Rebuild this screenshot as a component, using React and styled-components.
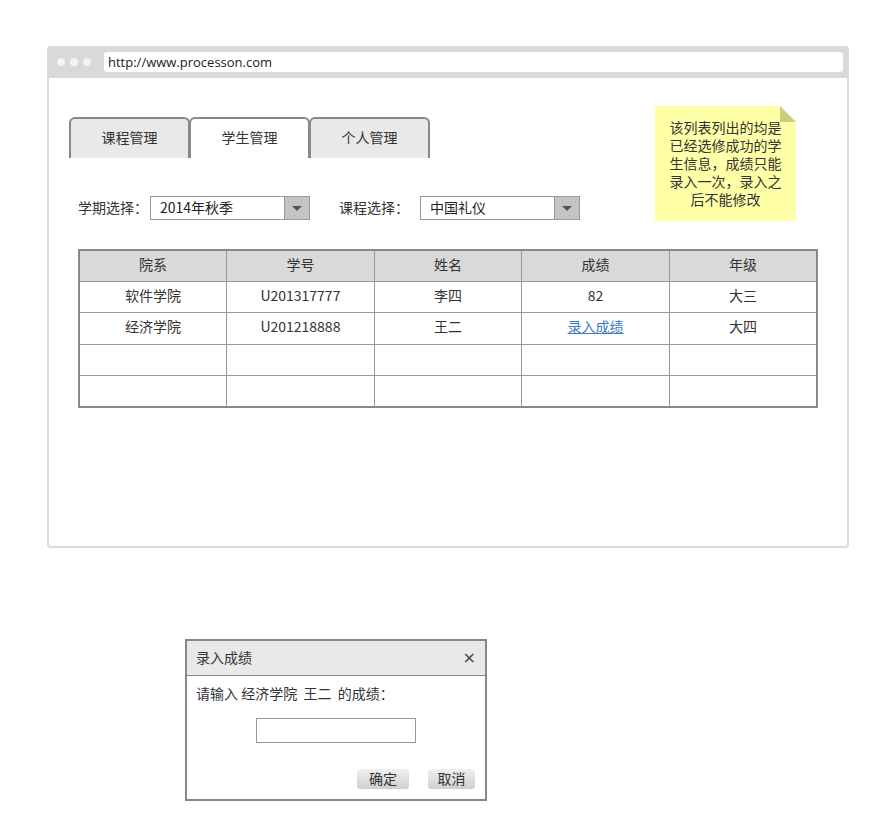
import React from 'react';
import styled, { createGlobalStyle } from 'styled-components';

const GlobalStyle = createGlobalStyle`
  body {
    margin: 0;
    background: #fff;
    font-family: "Noto Sans CJK SC", "Noto Sans", sans-serif;
    font-size: 14px;
    color: #333;
  }
`;

const Page = styled.div`
  width: 880px;
  height: 832px;
  padding: 46px 0 0 47px;
  box-sizing: border-box;
`;

const Frame = styled.div`
  position: relative;
  width: 802px;
  height: 502px;
  box-sizing: border-box;
  border: 2px solid #d9d9d9;
  border-radius: 4px;
  display: flex;
  flex-direction: column;
`;

const TopBar = styled.div`
  height: 30px;
  background: #d9d9d9;
  display: flex;
  align-items: center;
  padding: 0 4px 2px 8px;
  box-sizing: border-box;
  gap: 5px;
`;

const Dot = styled.span`
  width: 8px;
  height: 8px;
  border-radius: 50%;
  background: #f4f4f4;
`;

const UrlField = styled.div`
  flex: 1;
  margin-left: 8px;
  height: 20px;
  background: #fff;
  border-radius: 3px;
  display: flex;
  align-items: center;
  padding-left: 4px;
  font-family: "Open Sans", "Noto Sans", sans-serif;
  font-size: 13px;
  color: #222;
`;

const Content = styled.div`
  padding: 39px 0 0 20px;
`;

const Tabs = styled.div`
  display: flex;
`;

const Tab = styled.div`
  width: 121px;
  height: 41px;
  box-sizing: border-box;
  border: 2px solid #888;
  border-bottom: none;
  border-radius: 6px 6px 0 0;
  background: ${p => (p.$active ? '#fff' : '#e9e9e9')};
  margin-left: ${p => (p.$first ? '0' : '-1px')};
  padding-bottom: 4px;
  display: flex;
  align-items: center;
  justify-content: center;
  color: #333;
  font-size: 14px;
`;

const FilterRow = styled.div`
  display: flex;
  align-items: center;
  margin: 38px 0 0 9px;
  height: 24px;
`;

const Label = styled.span`
  font-size: 14px;
  color: #333;
  width: ${p => p.$w}px;
  margin-left: ${p => p.$ml || 0}px;
  padding-bottom: 2px;
`;

const Select = styled.div`
  width: 160px;
  height: 24px;
  box-sizing: border-box;
  border: 1px solid #999;
  display: flex;
  background: #fff;
`;

const SelectValue = styled.div`
  flex: 1;
  display: flex;
  align-items: center;
  padding: 0 0 2px 9px;
  font-size: 14px;
  color: #222;
`;

const SelectArrow = styled.div`
  width: 24px;
  background: #c4c4c4;
  border-left: 1px solid #999;
  display: flex;
  align-items: center;
  justify-content: center;
  &::after {
    content: '';
    border-left: 5px solid transparent;
    border-right: 5px solid transparent;
    border-top: 5px solid #555;
  }
`;

const Table = styled.table`
  margin: 29px 0 0 9px;
  width: 740px;
  border-collapse: collapse;
  border: 2px solid #888;
  table-layout: fixed;
`;

const Row = styled.tr`
  height: ${p => p.$h}px;
`;

const Th = styled.th`
  background: #d9d9d9;
  border: 1px solid #999;
  font-weight: normal;
  font-size: 14px;
  color: #333;
  padding: 0 0 4px;
  vertical-align: middle;
`;

const Td = styled.td`
  border: 1px solid #999;
  text-align: center;
  font-size: 14px;
  color: #333;
  padding: 0 0 4px;
  vertical-align: middle;
`;

const Link = styled.a`
  color: #3b7ac4;
  text-decoration: underline;
  cursor: pointer;
`;

const Note = styled.div`
  position: absolute;
  top: 58px;
  left: 606px;
  width: 141px;
  height: 115px;
  box-sizing: border-box;
  background: #ffffa8;
  padding: 12px 14px 0;
  font-size: 14px;
  line-height: 18px;
  text-align: center;
  color: #333;
  &::before {
    content: '';
    position: absolute;
    top: 0;
    right: 0;
    border-style: solid;
    border-width: 0 16px 16px 0;
    border-color: #fff #fff #cccc7c #cccc7c;
  }
`;

const Dialog = styled.div`
  margin: 91px 0 0 138px;
  width: 302px;
  height: 162px;
  box-sizing: border-box;
  border: 2px solid #888;
  display: flex;
  flex-direction: column;
`;

const DialogHeader = styled.div`
  height: 35px;
  background: #e9e9e9;
  border-bottom: 1px solid #888;
  box-sizing: border-box;
  display: flex;
  align-items: center;
  justify-content: space-between;
  padding: 0 9px 2px 9px;
  font-size: 14px;
  color: #333;
`;

const Close = styled.span`
  font-size: 16px;
  color: #444;
  font-family: "DejaVu Sans", sans-serif;
`;

const DialogBody = styled.div`
  padding: 7px 9px 0 9px;
  font-size: 14px;
  color: #333;
  white-space: pre;
`;

const InputBox = styled.div`
  width: 160px;
  height: 25px;
  box-sizing: border-box;
  border: 1px solid #999;
  margin: 15px 0 0 69px;
`;

const Actions = styled.div`
  display: flex;
  justify-content: flex-end;
  gap: 19px;
  margin-top: 26px;
  padding-right: 10px;
`;

const Button = styled.div`
  width: ${p => p.$w}px;
  height: 20px;
  border-radius: 3px;
  background: linear-gradient(#f0f0f0, #cfcfcf);
  display: flex;
  align-items: center;
  justify-content: center;
  padding-bottom: 2px;
  box-sizing: border-box;
  font-size: 14px;
  color: #333;
`;

const rows = [
  ['软件学院', 'U201317777', '李四', '82', '大三'],
  ['经济学院', 'U201218888', '王二', null, '大四'],
  ['', '', '', '', ''],
  ['', '', '', '', ''],
];

export default function App() {
  return (
    <Page>
      <GlobalStyle />
      <Frame>
        <TopBar>
          <Dot />
          <Dot />
          <Dot />
          <UrlField>http://www.processon.com</UrlField>
        </TopBar>
        <Content>
          <Tabs>
            <Tab $first>课程管理</Tab>
            <Tab $active>学生管理</Tab>
            <Tab>个人管理</Tab>
          </Tabs>
          <FilterRow>
            <Label $w={72}>学期选择：</Label>
            <Select>
              <SelectValue>2014年秋季</SelectValue>
              <SelectArrow />
            </Select>
            <Label $w={81} $ml={29}>课程选择：</Label>
            <Select>
              <SelectValue>中国礼仪</SelectValue>
              <SelectArrow />
            </Select>
          </FilterRow>
          <Table>
            <thead>
              <Row $h={31}>
                {['院系', '学号', '姓名', '成绩', '年级'].map(h => (
                  <Th key={h}>{h}</Th>
                ))}
              </Row>
            </thead>
            <tbody>
              {rows.map((r, i) => (
                <Row key={i} $h={31.6}>
                  {r.map((c, j) => (
                    <Td key={j}>{c === null ? <Link>录入成绩</Link> : c}</Td>
                  ))}
                </Row>
              ))}
            </tbody>
          </Table>
        </Content>
        <Note>该列表列出的均是已经选修成功的学生信息，成绩只能录入一次，录入之后不能修改</Note>
      </Frame>
      <Dialog>
        <DialogHeader>
          <span>录入成绩</span>
          <Close>×</Close>
        </DialogHeader>
        <DialogBody>请输入 经济学院  王二  的成绩：</DialogBody>
        <InputBox />
        <Actions>
          <Button $w={52}>确定</Button>
          <Button $w={47}>取消</Button>
        </Actions>
      </Dialog>
    </Page>
  );
}
